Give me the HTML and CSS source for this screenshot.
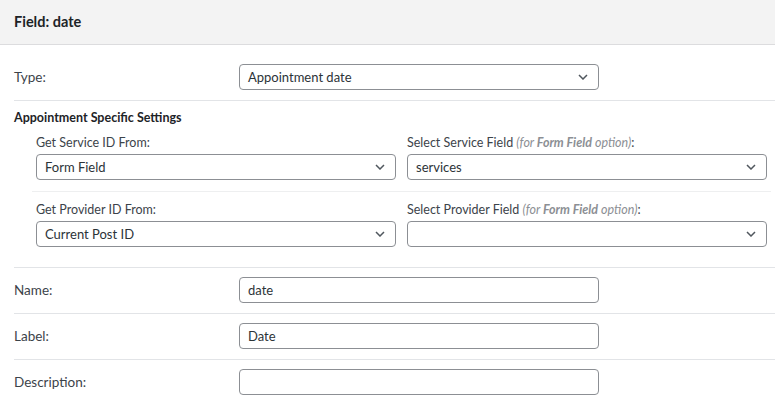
FILE: index.html
```html
<!DOCTYPE html>
<html>
<head>
<meta charset="utf-8">
<link rel="stylesheet" href="styles.css">
</head>
<body>
<div class="panel">
  <div class="header"><h2 class="title">Field: date</h2></div>
  <div class="body">
    <div class="row row-first">
      <div class="label">Type:</div>
      <div class="control">
        <div class="select"><span class="val">Appointment date</span><svg class="chev" width="10" height="6" viewBox="0 0 10 6"><path d="M1 1 L5 5 L9 1" fill="none" stroke="#50575e" stroke-width="1.5"/></svg></div>
      </div>
    </div>
    <div class="section">
      <div class="section-title">Appointment Specific Settings</div>
      <div class="subrow">
        <div class="subcol">
          <div class="sublabel">Get Service ID From:</div>
          <div class="select"><span class="val">Form Field</span><svg class="chev" width="10" height="6" viewBox="0 0 10 6"><path d="M1 1 L5 5 L9 1" fill="none" stroke="#50575e" stroke-width="1.5"/></svg></div>
        </div>
        <div class="subcol">
          <div class="sublabel">Select Service Field <i class="hint">(for <b>Form Field</b> option)</i>:</div>
          <div class="select"><span class="val">services</span><svg class="chev" width="10" height="6" viewBox="0 0 10 6"><path d="M1 1 L5 5 L9 1" fill="none" stroke="#50575e" stroke-width="1.5"/></svg></div>
        </div>
      </div>
      <div class="subrow subrow-last">
        <div class="subcol">
          <div class="sublabel">Get Provider ID From:</div>
          <div class="select"><span class="val">Current Post ID</span><svg class="chev" width="10" height="6" viewBox="0 0 10 6"><path d="M1 1 L5 5 L9 1" fill="none" stroke="#50575e" stroke-width="1.5"/></svg></div>
        </div>
        <div class="subcol">
          <div class="sublabel">Select Provider Field <i class="hint">(for <b>Form Field</b> option)</i>:</div>
          <div class="select"><span class="val"></span><svg class="chev" width="10" height="6" viewBox="0 0 10 6"><path d="M1 1 L5 5 L9 1" fill="none" stroke="#50575e" stroke-width="1.5"/></svg></div>
        </div>
      </div>
    </div>
    <div class="row">
      <div class="label">Name:</div>
      <div class="control"><div class="input">date</div></div>
    </div>
    <div class="row">
      <div class="label">Label:</div>
      <div class="control"><div class="input">Date</div></div>
    </div>
    <div class="row row-last">
      <div class="label">Description:</div>
      <div class="control"><div class="input"></div></div>
    </div>
  </div>
</div>
</body>
</html>
```
FILE: styles.css
```css
html, body {
  margin: 0;
  padding: 0;
  background: #ffffff;
}
body {
  font-family: "Lato", "Noto Sans", sans-serif;
  font-size: 13px;
  color: #3c434a;
  overflow: hidden;
}
.panel {
  width: 775px;
}
.header {
  height: 44px;
  background: #f3f3f3;
  border-bottom: 1px solid #dcdcde;
  display: flex;
  align-items: center;
  padding-left: 14px;
}
.title {
  margin: 0;
  font-size: 14.5px;
  font-weight: 700;
  color: #1d2327;
  position: relative;
  top: -1px;
}
.body {
  padding-left: 14px;
}
.row {
  display: flex;
  align-items: center;
  padding: 9px 0 10px;
  border-bottom: 1px solid #e2e4e7;
}
.row-first {
  padding-top: 19px;
}
.row-last {
  border-bottom: none;
}
.label {
  width: 225px;
  flex: none;
  color: #3c434a;
  font-size: 13.5px;
  line-height: 18px;
}
.control {
  width: 360px;
}
.select, .input {
  box-sizing: border-box;
  height: 26px;
  border: 1px solid #8c8f94;
  border-radius: 4px;
  background: #fff;
  display: flex;
  align-items: center;
  padding: 0 8px;
  color: #2c3338;
  font-size: 13px;
  line-height: 18px;
}
.select .val {
  flex: 1;
}
.chev {
  flex: none;
  margin-right: 2px;
}
.section {
  border-bottom: 1px solid #e2e4e7;
  padding-top: 8px;
  padding-bottom: 20px;
}
.section-title {
  font-weight: 700;
  color: #1d2327;
  font-size: 12.5px;
  line-height: 18px;
}
.subrow {
  display: flex;
  gap: 11px;
  margin-left: 18px;
  margin-right: 4px;
  padding: 7px 0 11px 4px;
  border-bottom: 1px solid #eeeff0;
}
.subrow-last {
  border-bottom: none;
  padding-top: 9px;
  padding-bottom: 0;
}
.subcol {
  width: 360px;
  flex: none;
  display: flex;
  flex-direction: column;
  gap: 2px;
}
.sublabel {
  font-size: 12.5px;
  color: #3c434a;
  line-height: 18px;
}
.hint {
  color: #8c8f94;
}
.hint b {
  font-weight: 700;
}
```
